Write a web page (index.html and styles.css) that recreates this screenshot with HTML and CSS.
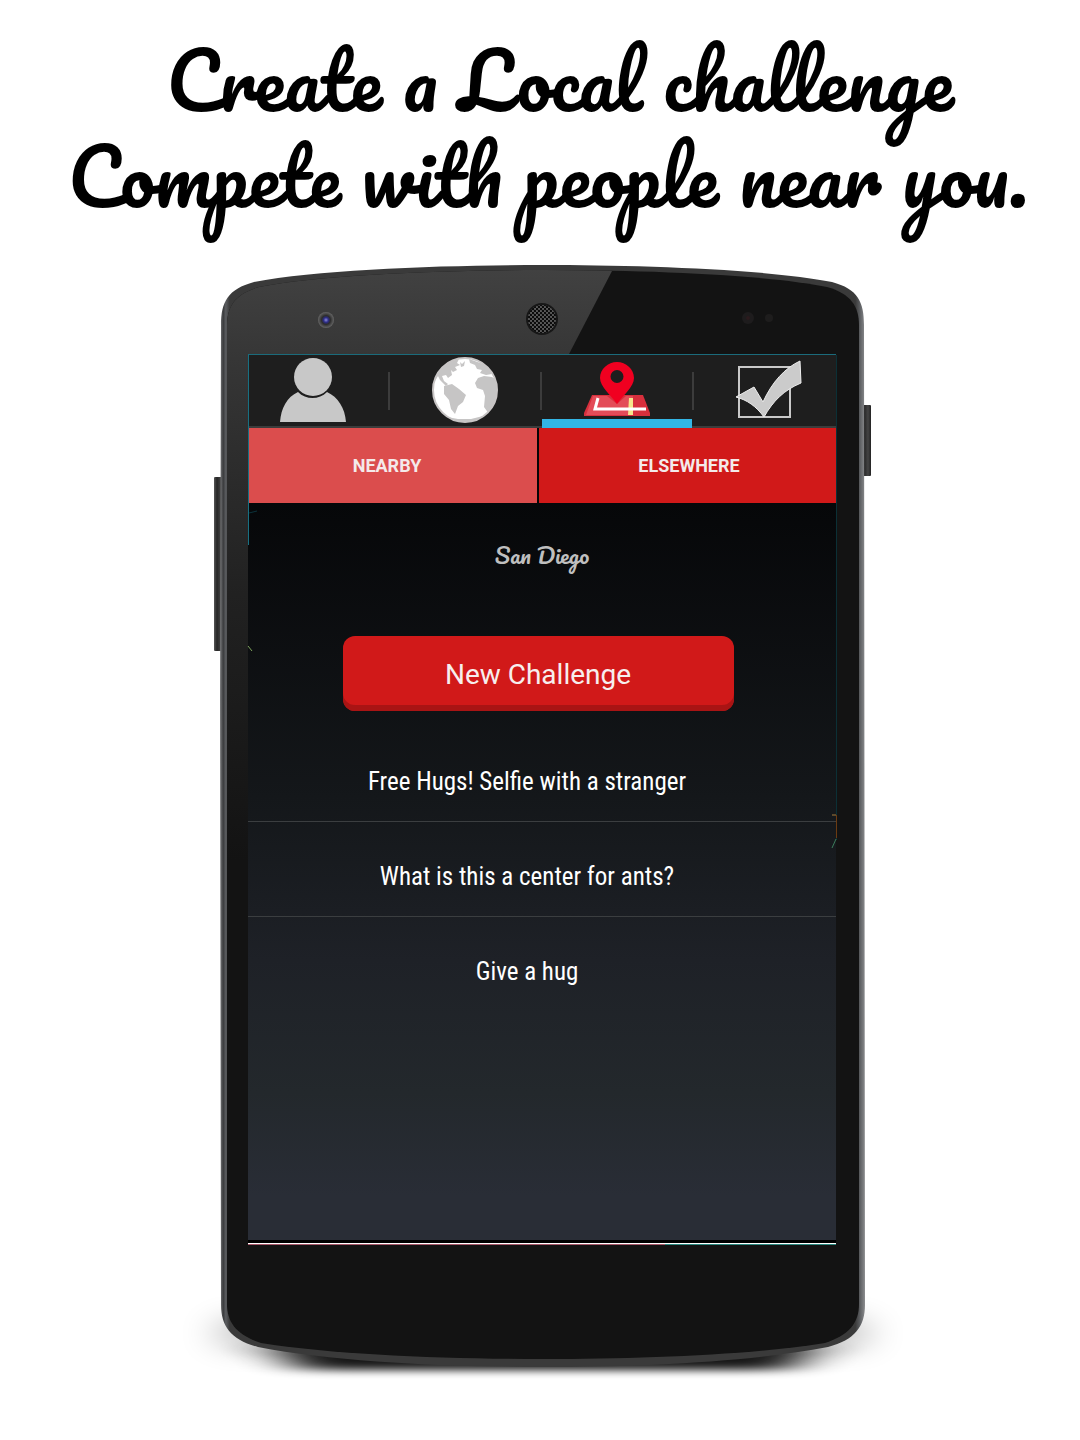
FILE: index.html
```html
<!DOCTYPE html>
<html lang="en">
<head>
<meta charset="utf-8">
<meta name="viewport" content="width=device-width, initial-scale=1">
<title>Local challenges</title>
<link rel="stylesheet" href="styles.css">
</head>
<body>
<main class="promo">
  <h1 class="headline"><span class="headline-first">Create a Local challenge</span><span>Compete with people near you.</span></h1>

  <div class="phone">
    <svg class="chassis" viewBox="210 264 660 1108" preserveAspectRatio="none" aria-hidden="true">
      <defs>
        <linearGradient id="rim" x1="0" x2="1" y1="0" y2="0">
          <stop offset="0" stop-color="#7b7c7e"/><stop offset=".005" stop-color="#3a3b3d"/><stop offset=".009" stop-color="#5b5d60"/><stop offset=".015" stop-color="#3a3a3a"/>
          <stop offset=".985" stop-color="#3a3a3a"/><stop offset=".992" stop-color="#5b5d60"/><stop offset="1" stop-color="#8b8c8e"/>
        </linearGradient>
        <linearGradient id="glare" gradientUnits="userSpaceOnUse" x1="0" y1="270" x2="0" y2="860">
          <stop offset="0" stop-color="#414141"/><stop offset=".15" stop-color="#363636"/><stop offset=".55" stop-color="#212121"/><stop offset="1" stop-color="#131313"/>
        </linearGradient>
        <linearGradient id="key" x1="0" x2="1" y1="0" y2="0">
          <stop offset="0" stop-color="#555"/><stop offset=".3" stop-color="#252525"/><stop offset=".7" stop-color="#444"/><stop offset="1" stop-color="#222"/>
        </linearGradient>
        <pattern id="mesh" width="4" height="4" patternUnits="userSpaceOnUse">
          <rect width="4" height="4" fill="#5a5a5a"/><circle cx="1" cy="1" r="1.2" fill="#080808"/><circle cx="3" cy="3" r="1.2" fill="#080808"/>
        </pattern>
        <radialGradient id="lens"><stop offset="0" stop-color="#8a8ad8"/><stop offset=".3" stop-color="#2c2c88"/><stop offset=".55" stop-color="#2c2c2c"/><stop offset="1" stop-color="#666"/></radialGradient>
        <filter id="soft" x="-20%" y="-100%" width="140%" height="300%"><feGaussianBlur stdDeviation="26 4"/></filter>
        <filter id="haze" x="-30%" y="-80%" width="160%" height="260%"><feGaussianBlur stdDeviation="20 12"/></filter>
      </defs>
      <rect x="222" y="1318" width="642" height="30" fill="#000" opacity=".25" filter="url(#haze)"/>
      <path d="M270 1346H816L790 1370H300Z" fill="#000" opacity=".9" filter="url(#soft)"/>
      <rect x="214" y="477" width="10" height="174" rx="1" fill="url(#key)"/>
      <rect x="861" y="405" width="10" height="71" rx="1" fill="url(#key)"/>
      <path d="M221 325C221 302 228 289 254 282C320 269 450 265 543 265S766 269 832 282C858 289 864 302 864 325L865 1305C865 1326 855 1340 828 1347C750 1362 640 1367 543 1367S336 1362 258 1347C231 1340 221 1326 221 1305L220 700Z" fill="url(#rim)"/>
      <path d="M227 326C227 306 235 294 259 287C325 274 450 270 543 270S761 274 827 287C851 294 859 306 859 326V1304C859 1323 849 1335 825 1343C750 1355 640 1359 543 1359S336 1355 261 1343C237 1335 227 1323 227 1304Z" fill="#131313"/>
      <path d="M227 860V326C227 306 235 294 259 287C325 274 450 270 543 270Q580 270 612 271L307 860Z" fill="url(#glare)"/>
      <circle cx="326" cy="320" r="8" fill="url(#lens)"/>
      <circle cx="542" cy="319" r="16" fill="#171717"/>
      <circle cx="542" cy="319" r="14" fill="url(#mesh)"/>
      <circle cx="748" cy="318" r="6" fill="#1e1c1d"/><circle cx="748" cy="318" r="2" fill="#2b1a1d"/>
      <circle cx="769" cy="318" r="4" fill="#1e1d1d"/>
    </svg>

    <div class="screen">
      <nav class="tabs" aria-label="Sections">
        <a class="tab" href="#profile" aria-label="Profile">
          <svg class="icon" viewBox="0 0 66 66"><circle cx="33" cy="20" r="19" fill="#c8c8c8"/><path d="M0 65C1 51 7 40 18 35C26 43 39 43 47 35C58 40 65 51 66 65Z" fill="#c8c8c8"/></svg>
        </a>
        <a class="tab" href="#world" aria-label="World">
          <svg class="icon" viewBox="0 0 66 66">
            <clipPath id="globe"><circle cx="33" cy="33" r="32"/></clipPath>
            <circle cx="33" cy="33" r="32" fill="#fff"/>
            <g clip-path="url(#globe)" fill="#c6c5c5">
              <path d="M2 22C6 12 16 4 27 2L25 6L28 8L23 10L25 13L21 15L19 13L20 18L16 21L14 18L10 19L12 24L16 27L14 29L8 23L6 19L3 24Z"/>
              <path d="M12 29L20 27L27 32L34 38L31 45L26 49L23 57L19 52L17 43L12 37Z"/>
              <path d="M28 5L30 7L33 4L32 9L29 10Z"/>
              <path d="M37 2L54 8L60 17L54 18L48 16L50 13L45 12L43 8L38 6Z"/>
              <path d="M46 21L52 19L60 20L66 24V44L57 57L52 50L53 39L51 33L45 31L43 26Z"/>
              <path d="M15 60L26 62L39 62L51 59L46 66H21Z"/>
            </g>
            <circle cx="33" cy="33" r="32" fill="none" stroke="#c8c5c5" stroke-width="2"/>
          </svg>
        </a>
        <a class="tab tab-active" href="#local" aria-label="Local" aria-current="page">
          <svg class="icon" viewBox="0 0 66 66">
            <path d="M8 38H59L66 56V59H0V56Z" fill="#d72f3c"/><path d="M9 39H23L33 47L42 39H49L47 58H2Z" fill="#e34c58"/>
            <path d="M45 41H49V58H44Z" fill="#f6e58c"/>
            <path d="M14 41L11 52H62" fill="none" stroke="#fff" stroke-width="3"/>
            <path fill-rule="evenodd" d="M33 5C42 5 50 12 50 21C50 30 39 38 33 47C27 38 16 30 16 21C16 12 24 5 33 5ZM33 13A6 6 0 0 0 33 26A6 6 0 0 0 33 13Z" fill="#f00020"/>
          </svg>
        </a>
        <a class="tab" href="#completed" aria-label="Completed">
          <svg class="icon" viewBox="0 0 66 66">
            <rect x="3" y="10" width="51" height="50" fill="none" stroke="#c9c9c9" stroke-width="2"/>
            <path d="M0 40L18 30L27 45C36 25 49 11 64 4L65 26C48 33 37 44 28 60C20 49 11 43 0 40Z" fill="#cbcbcb" stroke="#eee" stroke-width="1"/>
          </svg>
        </a>
      </nav>

      <div class="scopes">
        <button class="scope scope-current" type="button">NEARBY</button>
        <button class="scope" type="button">ELSEWHERE</button>
      </div>

      <section class="content">
        <h2 class="place">San Diego</h2>
        <button class="create" type="button">New Challenge</button>
        <ul class="challenges">
          <li class="challenge">Free Hugs! Selfie with a stranger</li>
          <li class="challenge">What is this a center for ants?</li>
          <li class="challenge">Give a hug</li>
        </ul>
      </section>
      <div class="screen-end"></div>
    </div>

    <svg class="specks" viewBox="210 264 660 1108" preserveAspectRatio="none" aria-hidden="true">
      <path d="M248.500 355V545" stroke="#187082"/><path d="M836.500 355V840" stroke="#0b3036"/>
      <path d="M248 646L252 651" stroke="#7fa45d"/><path d="M249 513L257 511" stroke="#0c333c"/>
      <path d="M832 815H836" stroke="#a77b3a"/><path d="M836.500 815V838" stroke="#6b3b12"/><path d="M836 839L832 848" stroke="#3c7d5b"/>
    </svg>
  </div>
</main>
</body>
</html>
```
FILE: styles.css
```css
* {
  box-sizing: border-box;
}

body {
  margin: 0;
  background: #fff;
  font-family: Roboto, "Liberation Sans", sans-serif;
}

.promo {
  padding: 32px 16px 68px;
}

.headline {
  margin: 0 0 40px;
  padding-left: 16px;
  color: #000;
  font-family: Pacifico, "Liberation Serif", serif;
  font-size: 77px;
  font-weight: 400;
  line-height: 96px;
  text-align: center;
}

.headline span {
  display: block;
}

.headline-first {
  padding-left: 24px;
}

.phone {
  position: relative;
  max-width: 660px;
  margin: 0 auto;
  padding: 90px 34px 127px 38px;
}

.chassis,
.specks {
  position: absolute;
  inset: 0;
  width: 100%;
  height: 100%;
  overflow: visible;
  pointer-events: none;
}

.specks {
  fill: none;
}

.screen {
  position: relative;
  overflow: hidden;
  border-top: 1px solid #1b6b7b;
  background: #050607;
}

.tabs {
  display: flex;
  height: 73px;
  margin: 0 -9px 0 -11px;
  border-bottom: 2px solid #3c3c3c;
  background: #1e1e1e;
}

.tab {
  position: relative;
  display: flex;
  flex: 1;
  justify-content: center;
  height: 73px;
  padding-top: 2px;
}

.tab + .tab::before {
  position: absolute;
  top: 17px;
  left: -1px;
  width: 2px;
  height: 38px;
  background: #3c3c3c;
  content: "";
}

.tab-active::after {
  position: absolute;
  right: 1px;
  bottom: 0;
  left: 1px;
  height: 9px;
  background: #33b5e5;
  content: "";
}

.icon {
  width: 66px;
  height: 66px;
}

.scopes {
  display: grid;
  grid-template-columns: 1fr 1fr;
  gap: 2px;
  margin: 0 -3px 0 -11px;
}

.scope {
  height: 75px;
  border: 0;
  background: #d11919;
  color: #f4eaea;
  font: 700 18px/24px Roboto, "Liberation Sans", sans-serif;
}

.scope-current {
  background: #db4d4d;
}

.content {
  display: flex;
  flex-direction: column;
  align-items: center;
  min-height: 737px;
  padding-top: 36px;
  background: linear-gradient(#060709, #14171a 40%, #1e2127 62%, #23282c 80%, #292d36 94%);
}

.place {
  margin: 0 0 65px;
  color: #bfbfbf;
  font: 400 22px/32px Pacifico, "Liberation Serif", serif;
}

.create {
  width: 67%;
  max-width: 391px;
  height: 75px;
  margin-right: 8px;
  padding-top: 4px;
  border: 0;
  border-radius: 12px;
  background: #d11919;
  box-shadow: inset 0 -6px #a91414;
  color: #f7eeee;
  font: 400 28px/36px Roboto, "Liberation Sans", sans-serif;
}

.challenges {
  align-self: stretch;
  margin: 16px 0 0;
  padding: 0;
  list-style: none;
}

.challenge {
  padding: 39px 30px 23px 0;
  border-bottom: 1px solid #3b3e40;
  color: #fff;
  font-family: "Roboto Condensed", Roboto, "Liberation Sans", sans-serif;
  font-size: 25px;
  line-height: 32px;
  text-align: center;
}

.challenge:last-child {
  border-bottom: 0;
}

.screen-end {
  height: 5px;
  background:
    linear-gradient(90deg, #a85669 71%, #2a8a80 71%) bottom / 100% 1px no-repeat,
    linear-gradient(#000 3px, #fff 3px);
}
```
